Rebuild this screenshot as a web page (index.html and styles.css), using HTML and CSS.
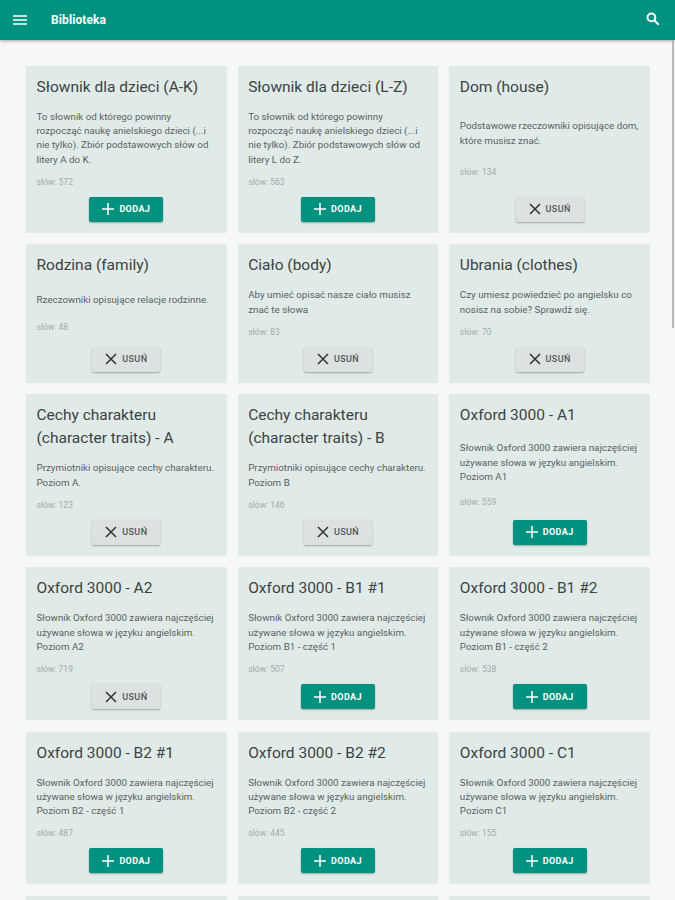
FILE: index.html
```html
<!DOCTYPE html>
<html lang="pl">
<head>
  <meta charset="UTF-8">
  <meta name="viewport" content="width=device-width, initial-scale=1.0">
  <link rel="stylesheet" href="styles.css">
  <title>Biblioteka</title>
</head>
<body>

  <header class="topbar">
    <svg class="menu-icon" viewBox="0 0 14 10" aria-hidden="true"><path d="M0 1h14M0 5h14M0 9h14"/></svg>
    <span class="topbar-title">Biblioteka</span>
    <svg class="search-icon" viewBox="0 0 14 14" aria-hidden="true"><circle cx="5.4" cy="5.4" r="3.9"/><path d="M8.3 8.3l4.4 4.4"/></svg>
  </header>

  <div class="scrollbar"></div>

  <main class="grid">
    <section class="card">
      <h2>Słownik dla dzieci (A-K)</h2>
      <p class="desc">To słownik od którego powinny rozpocząć naukę anielskiego dzieci (...i nie tylko). Zbiór podstawowych słów od litery A do K.</p>
      <p class="count">słów: 572</p>
      <button class="btn add"><svg viewBox="0 0 12 12"><path d="M6 0v12M0 6h12"/></svg>DODAJ</button>
    </section>
    <section class="card">
      <h2>Słownik dla dzieci (L-Z)</h2>
      <p class="desc">To słownik od którego powinny rozpocząć naukę anielskiego dzieci (...i nie tylko). Zbiór podstawowych słów od litery L do Z.</p>
      <p class="count">słów: 563</p>
      <button class="btn add"><svg viewBox="0 0 12 12"><path d="M6 0v12M0 6h12"/></svg>DODAJ</button>
    </section>
    <section class="card">
      <h2>Dom (house)</h2>
      <p class="desc">Podstawowe rzeczowniki opisujące dom, które musisz znać.</p>
      <p class="count">słów: 134</p>
      <button class="btn remove"><svg viewBox="0 0 12 12"><path d="M1 1l10 10M11 1L1 11"/></svg>USUŃ</button>
    </section>

    <section class="card">
      <h2>Rodzina (family)</h2>
      <p class="desc">Rzeczowniki opisujące relacje rodzinne.</p>
      <p class="count">słów: 48</p>
      <button class="btn remove"><svg viewBox="0 0 12 12"><path d="M1 1l10 10M11 1L1 11"/></svg>USUŃ</button>
    </section>
    <section class="card">
      <h2>Ciało (body)</h2>
      <p class="desc">Aby umieć opisać nasze ciało musisz znać te słowa</p>
      <p class="count">słów: 83</p>
      <button class="btn remove"><svg viewBox="0 0 12 12"><path d="M1 1l10 10M11 1L1 11"/></svg>USUŃ</button>
    </section>
    <section class="card">
      <h2>Ubrania (clothes)</h2>
      <p class="desc">Czy umiesz powiedzieć po angielsku co nosisz na sobie? Sprawdź się.</p>
      <p class="count">słów: 70</p>
      <button class="btn remove"><svg viewBox="0 0 12 12"><path d="M1 1l10 10M11 1L1 11"/></svg>USUŃ</button>
    </section>

    <section class="card">
      <h2>Cechy charakteru (character traits) - A</h2>
      <p class="desc">Przymiotniki opisujące cechy charakteru. Poziom A.</p>
      <p class="count">słów: 123</p>
      <button class="btn remove"><svg viewBox="0 0 12 12"><path d="M1 1l10 10M11 1L1 11"/></svg>USUŃ</button>
    </section>
    <section class="card">
      <h2>Cechy charakteru (character traits) - B</h2>
      <p class="desc">Przymiotniki opisujące cechy charakteru. Poziom B</p>
      <p class="count">słów: 146</p>
      <button class="btn remove"><svg viewBox="0 0 12 12"><path d="M1 1l10 10M11 1L1 11"/></svg>USUŃ</button>
    </section>
    <section class="card">
      <h2>Oxford 3000 - A1</h2>
      <p class="desc">Słownik Oxford 3000 zawiera najczęściej używane słowa w języku angielskim. Poziom A1</p>
      <p class="count">słów: 559</p>
      <button class="btn add"><svg viewBox="0 0 12 12"><path d="M6 0v12M0 6h12"/></svg>DODAJ</button>
    </section>

    <section class="card">
      <h2>Oxford 3000 - A2</h2>
      <p class="desc">Słownik Oxford 3000 zawiera najczęściej używane słowa w języku angielskim. Poziom A2</p>
      <p class="count">słów: 719</p>
      <button class="btn remove"><svg viewBox="0 0 12 12"><path d="M1 1l10 10M11 1L1 11"/></svg>USUŃ</button>
    </section>
    <section class="card">
      <h2>Oxford 3000 - B1 #1</h2>
      <p class="desc">Słownik Oxford 3000 zawiera najczęściej używane słowa w języku angielskim. Poziom B1 - część 1</p>
      <p class="count">słów: 507</p>
      <button class="btn add"><svg viewBox="0 0 12 12"><path d="M6 0v12M0 6h12"/></svg>DODAJ</button>
    </section>
    <section class="card">
      <h2>Oxford 3000 - B1 #2</h2>
      <p class="desc">Słownik Oxford 3000 zawiera najczęściej używane słowa w języku angielskim. Poziom B1 - część 2</p>
      <p class="count">słów: 538</p>
      <button class="btn add"><svg viewBox="0 0 12 12"><path d="M6 0v12M0 6h12"/></svg>DODAJ</button>
    </section>

    <section class="card">
      <h2>Oxford 3000 - B2 #1</h2>
      <p class="desc">Słownik Oxford 3000 zawiera najczęściej używane słowa w języku angielskim. Poziom B2 - część 1</p>
      <p class="count">słów: 487</p>
      <button class="btn add"><svg viewBox="0 0 12 12"><path d="M6 0v12M0 6h12"/></svg>DODAJ</button>
    </section>
    <section class="card">
      <h2>Oxford 3000 - B2 #2</h2>
      <p class="desc">Słownik Oxford 3000 zawiera najczęściej używane słowa w języku angielskim. Poziom B2 - część 2</p>
      <p class="count">słów: 445</p>
      <button class="btn add"><svg viewBox="0 0 12 12"><path d="M6 0v12M0 6h12"/></svg>DODAJ</button>
    </section>
    <section class="card">
      <h2>Oxford 3000 - C1</h2>
      <p class="desc">Słownik Oxford 3000 zawiera najczęściej używane słowa w języku angielskim. Poziom C1</p>
      <p class="count">słów: 155</p>
      <button class="btn add"><svg viewBox="0 0 12 12"><path d="M6 0v12M0 6h12"/></svg>DODAJ</button>
    </section>

    <section class="card"></section>
    <section class="card"></section>
    <section class="card"></section>
  </main>

</body>
</html>
```

FILE: styles.css
```css
html, body {
  height: 100%;
  overflow: hidden;
}

body {
  margin: 0;
  font-family: Roboto, "Noto Sans", sans-serif;
  background-color: #f6f7f7;
  color: #333;
}

.topbar {
  height: 40px;
  display: flex;
  align-items: center;
  padding: 0 15px 0 13px;
  background-color: #00927f;
  color: #fff;
  box-shadow: 0 1px 3px rgba(0, 0, 0, 0.35);
}

.menu-icon {
  width: 14px;
  height: 10px;
  fill: none;
  stroke: #fff;
  stroke-width: 1.5;
}

.search-icon {
  width: 14px;
  height: 14px;
  margin-left: auto;
  margin-top: -3px;
  fill: none;
  stroke: #fff;
  stroke-width: 2;
}

.topbar-title {
  margin-left: 24px;
  font-size: 12px;
  font-weight: 700;
  letter-spacing: 0.1px;
}

.scrollbar {
  position: absolute;
  top: 40px;
  right: 1px;
  width: 2px;
  height: 288px;
  background-color: #b5b9b9;
}

.grid {
  display: grid;
  grid-template-columns: repeat(3, 1fr);
  gap: 11.5px 11px;
  padding: 25.9px 25px 0 26px;
}

.card {
  min-height: 100px;
  display: flex;
  flex-direction: column;
  justify-content: space-between;
  align-items: flex-start;
  padding: 10px 10.5px 11px;
  background-color: #e0ebe9;
}

.card h2 {
  margin: 0 0 11px;
  font-size: 15.5px;
  line-height: 23px;
  font-weight: 400;
  color: #3d4242;
}

.desc {
  margin: 0 0 9px;
  font-size: 9.8px;
  line-height: 14.25px;
  color: #5a5f5f;
}

.count {
  margin: 0 0 9px;
  font-size: 8.5px;
  line-height: 12px;
  color: #a3a9a8;
}

.btn {
  align-self: center;
  height: 25px;
  display: flex;
  align-items: center;
  justify-content: center;
  gap: 5px;
  border: none;
  border-radius: 2px;
  font-family: inherit;
  font-size: 9px;
  font-weight: 700;
  letter-spacing: 0.4px;
  box-shadow: 0 1px 2px rgba(0, 0, 0, 0.3);
}

.btn svg {
  width: 12px;
  height: 12px;
  fill: none;
  stroke: currentColor;
  stroke-width: 1.5;
}

.add {
  width: 74px;
  background-color: #00927f;
  color: #fff;
}

.remove {
  width: 68px;
  background-color: #dbe2e1;
  color: #555;
  font-weight: 500;
}

.remove svg {
  stroke: #333;
}
```
